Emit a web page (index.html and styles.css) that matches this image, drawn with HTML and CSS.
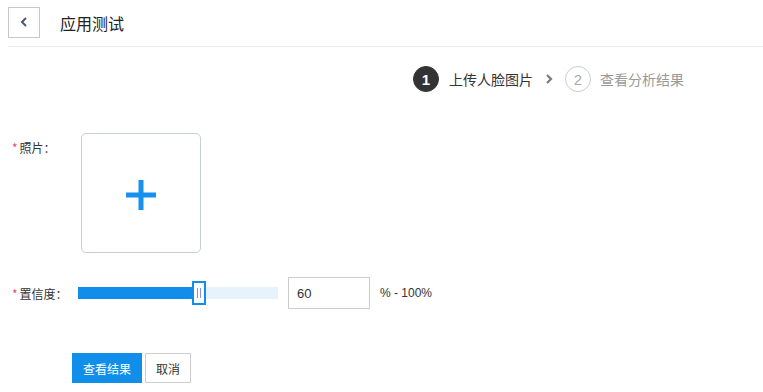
FILE: index.html
```html
<!DOCTYPE html>
<html lang="zh-CN">
<head>
  <meta charset="UTF-8">
  <meta name="viewport" content="width=device-width, initial-scale=1.0">
  <title>应用测试</title>
  <link rel="stylesheet" href="styles.css">
</head>
<body>
  <div class="page">
    <header class="topbar">
      <button class="back-btn">
        <svg width="8" height="10" viewBox="0 0 8 10"><polyline points="6,1 2,5 6,9" fill="none" stroke="#4b5b6c" stroke-width="2"/></svg>
      </button>
      <span class="page-title">应用测试</span>
    </header>

    <div class="steps">
      <div class="step active">
        <span class="step-num">1</span>
        <span class="step-text">上传人脸图片</span>
      </div>
      <svg class="step-arrow" width="8" height="10" viewBox="0 0 8 10"><polyline points="2,1 6,5 2,9" fill="none" stroke="#7a7a7a" stroke-width="2.2"/></svg>
      <div class="step">
        <span class="step-num">2</span>
        <span class="step-text">查看分析结果</span>
      </div>
    </div>

    <form class="test-form">
      <div class="form-row row-photo">
        <label class="form-label"><i>*</i>照片：</label>
        <div class="upload-box">
          <svg width="30" height="30" viewBox="0 0 30 30"><rect x="12.5" y="0" width="5" height="30" fill="#1890f0"/><rect x="0" y="12.5" width="30" height="5" fill="#1890f0"/></svg>
        </div>
      </div>

      <div class="form-row row-slider">
        <label class="form-label"><i>*</i>置信度：</label>
        <div class="slider">
          <div class="slider-fill" style="width: 60%"></div>
          <div class="slider-handle" style="left: 60%"></div>
        </div>
        <input class="num-input" type="text" value="60">
        <span class="range-text">% - 100%</span>
      </div>

      <div class="actions">
        <button type="button" class="btn btn-primary">查看结果</button>
        <button type="button" class="btn">取消</button>
      </div>
    </form>
  </div>
</body>
</html>
```

FILE: styles.css
```css
html, body {
  margin: 0;
  padding: 0;
  background: #fff;
  font-family: "Microsoft YaHei", "Noto Sans CJK SC", "Liberation Sans", sans-serif;
  color: #333;
}
.page {
  padding: 0 0 0 8px;
}
.topbar {
  display: flex;
  align-items: center;
  height: 46px;
  border-bottom: 1px solid #e9ecf3;
}
.back-btn {
  width: 32px;
  height: 31px;
  margin-top: -2px;
  border: 1px solid #c8c8c8;
  background: #fff;
  padding: 0;
  display: flex;
  align-items: center;
  justify-content: center;
  cursor: pointer;
}
.page-title {
  margin-left: 20px;
  font-size: 16px;
  color: #222;
}
.steps {
  display: flex;
  justify-content: flex-end;
  align-items: center;
  padding-right: 79px;
  margin-top: 19px;
  height: 26px;
}
.step {
  display: flex;
  align-items: center;
}
.step-num {
  width: 24px;
  height: 24px;
  border-radius: 50%;
  border: 1px solid #ccc;
  color: #aaa;
  font-family: "Liberation Sans", sans-serif;
  font-size: 15px;
  display: flex;
  align-items: center;
  justify-content: center;
}
.step.active .step-num {
  background: #333;
  border-color: #333;
  color: #fff;
  font-weight: bold;
}
.step-text {
  margin-left: 9px;
  font-size: 14px;
  color: #999;
}
.step.active .step-text {
  color: #333;
  margin-left: 10px;
}
.step-arrow {
  margin: 0 12px 0 12px;
}
.test-form {
  margin-top: 40px;
}
.form-row {
  display: flex;
}
.form-label {
  width: 66px;
  padding-left: 4px;
  font-size: 12px;
  color: #333;
}
.form-label i {
  font-style: normal;
  color: #e8457c;
  margin-right: 2px;
}
.row-photo {
  padding-top: 1px;
}
.row-photo .form-label {
  padding-top: 6px;
}
.upload-box {
  margin-left: 3px;
  width: 118px;
  height: 118px;
  border: 1px solid #c4cfdd;
  border-radius: 5px;
  display: flex;
  align-items: center;
  justify-content: center;
}
.upload-box svg {
  margin-top: 4px;
}
.row-slider {
  margin-top: 24px;
  align-items: center;
}
.slider {
  position: relative;
  width: 200px;
  height: 12px;
  background: #e6f2fc;
}
.slider-fill {
  height: 100%;
  background: #108ee9;
}
.slider-handle {
  position: absolute;
  top: -6px;
  width: 10px;
  height: 20px;
  margin-left: -6px;
  border: 2px solid #108ee9;
  background: #fff;
}
.slider-handle::before,
.slider-handle::after {
  content: "";
  position: absolute;
  top: 5px;
  width: 1px;
  height: 10px;
  background: #8c8cf0;
}
.slider-handle::before { left: 3px; }
.slider-handle::after { left: 6px; }
.num-input {
  margin-left: 10px;
  height: 30px;
  box-sizing: content-box;
  padding: 0 0 0 8px;
  width: 72px;
  border: 1px solid #ccc;
  font-family: "Liberation Sans", sans-serif;
  font-size: 13px;
  color: #333;
  outline: none;
}
.range-text {
  margin-left: 10px;
  font-family: "Liberation Sans", sans-serif;
  font-size: 12px;
  color: #333;
}
.actions {
  margin-top: 44px;
  padding-left: 64px;
  display: flex;
  gap: 3px;
}
.btn {
  height: 30px;
  padding: 0 10px;
  border: 1px solid #ccc;
  background: #fff;
  font-family: inherit;
  font-size: 12px;
  color: #333;
  cursor: pointer;
}
.btn-primary {
  width: 70px;
  border-color: #108ee9;
  background: #108ee9;
  color: #fff;
}
```
